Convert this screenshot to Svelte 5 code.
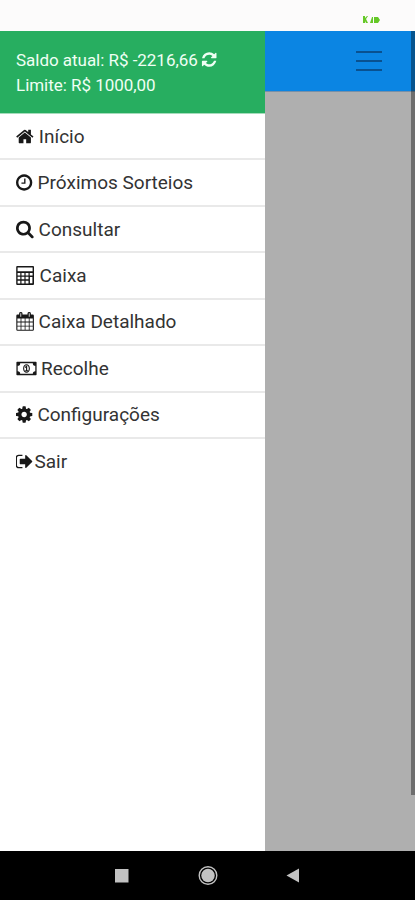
<script>
  const items = [
    { icon: 'home', label: 'Início', offset: 22.8 },
    { icon: 'clock', label: 'Próximos Sorteios', offset: 21.6 },
    { icon: 'search', label: 'Consultar', offset: 22.6 },
    { icon: 'calculator', label: 'Caixa', offset: 23.6 },
    { icon: 'calendar', label: 'Caixa Detalhado', offset: 22.6 },
    { icon: 'money', label: 'Recolhe', offset: 25 },
    { icon: 'cog', label: 'Configurações', offset: 21.4 },
    { icon: 'exit', label: 'Sair', offset: 18.4 }
  ];
</script>

{#snippet glyph(name)}
  {#if name === 'home'}
    <svg width="19" height="19" viewBox="64 0 1792 1792"><path d="M1472 992v480q0 26-19 45t-45 19h-384v-384h-256v384h-384q-26 0-45-19t-19-45v-480q0-1 .5-3t.5-3l575-474 575 474q1 2 1 6zm223-69l-62 74q-8 9-21 11h-3q-13 0-21-7l-692-577-692 577q-12 8-24 7-13-2-21-11l-62-74q-8-10-7-23.5t11-21.5l719-599q32-26 76-26t76 26l244 204v-195q0-14 9-23t23-9h192q14 0 23 9t9 23v408l219 182q10 8 11 21.5t-7 23.5z" /></svg>
  {:else if name === 'clock'}
    <svg width="19" height="19" viewBox="128 0 1792 1792"><path d="M1024 544v448q0 14-9 23t-23 9h-320q-14 0-23-9t-9-23v-64q0-14 9-23t23-9h224v-352q0-14 9-23t23-9h64q14 0 23 9t9 23zm416 352q0-148-73-273t-198-198-273-73-273 73-198 198-73 273 73 273 198 198 273 73 273-73 198-198 73-273zm224 0q0 209-103 385.5t-279.5 279.5-385.5 103-385.5-103-279.5-279.5-103-385.5 103-385.5 279.5-279.5 385.5-103 385.5 103 279.5 279.5 103 385.5z" /></svg>
  {:else if name === 'search'}
    <svg width="19" height="19" viewBox="64 64 1792 1792"><path d="M1216 832q0-185-131.5-316.5t-316.5-131.5-316.5 131.5-131.5 316.5 131.5 316.5 316.5 131.5 316.5-131.5 131.5-316.5zm512 832q0 52-38 90t-90 38q-54 0-90-38l-343-342q-179 124-399 124-143 0-273.5-55.5t-225-150-150-225-55.5-273.5 55.5-273.5 150-225 225-150 273.5-55.5 273.5 55.5 225 150 150 225 55.5 273.5q0 220-124 399l343 343q37 37 37 90z" /></svg>
  {:else if name === 'calculator'}
    <svg width="19" height="19" viewBox="0 0 19 19"><path fill-rule="evenodd" d="M1.2 0H17Q18 0 18 1V18Q18 19 17 19H1.2Q.2 19 .2 18V1Q.2 0 1.2 0ZM1.6 1.4V5.3H16.6V1.4ZM1.6 7V9.4H4.3V7ZM5.5 7V9.4H8.4V7ZM9.6 7V9.4H12.5V7ZM13.7 7V9.4H16.6V7ZM1.6 10.8V13.3H4.3V10.8ZM5.5 10.8V13.3H8.4V10.8ZM9.6 10.8V13.3H12.5V10.8ZM1.6 14.8V17.5H4.3V14.8ZM5.5 14.8V17.5H8.4V14.8ZM9.6 14.8V17.5H12.5V14.8ZM13.9 11V17.3H16.4V11Z" /></svg>
  {:else if name === 'calendar'}
    <svg width="19" height="19" viewBox="0 0 19 19"><path fill-rule="evenodd" d="M1.5 2.5H3.1V1.4Q3.1 0 4.8 0T6.5 1.4V2.5H11.5V1.4Q11.5 0 13.2 0T14.9 1.4V2.5H16.7Q17.9 2.5 17.9 3.7V17.6Q17.9 18.8 16.7 18.8H1.5Q.3 18.8 .3 17.6V3.7Q.3 2.5 1.5 2.5ZM4.4 1.2V4.8H5.2V1.2ZM12.8 1.2V4.8H13.6V1.2ZM1.4 6.5V9.6H4.6V6.5ZM5.4 6.5V9.6H8.7V6.5ZM9.5 6.5V9.6H12.8V6.5ZM13.6 6.5V9.6H16.8V6.5ZM1.4 10.4V13.7H4.6V10.4ZM5.4 10.4V13.7H8.7V10.4ZM9.5 10.4V13.7H12.8V10.4ZM13.6 10.4V13.7H16.8V10.4ZM1.4 14.5V17.7H4.6V14.5ZM5.4 14.5V17.7H8.7V14.5ZM9.5 14.5V17.7H12.8V14.5ZM13.6 14.5V17.7H16.8V14.5Z" /></svg>
  {:else if name === 'money'}
    <svg width="21" height="19" viewBox="0 0 21 19"><path fill-rule="evenodd" d="M1.2 2.8H19.8Q20.6 2.8 20.6 3.6V15.4Q20.6 16.2 19.8 16.2H1.2Q.4 16.2 .4 15.4V3.6Q.4 2.8 1.2 2.8ZM4.2 4.2Q4.2 6.8 1.7 6.8V12.2Q4.2 12.2 4.2 14.8H16.8Q16.8 12.2 19.3 12.2V6.8Q16.8 6.8 16.8 4.2ZM10.5 5.2C12.6 5.2 13.9 7.1 13.9 9.5S12.6 13.8 10.5 13.8 7.1 11.9 7.1 9.5 8.4 5.2 10.5 5.2ZM10.5 6.2C9 6.2 8.2 7.6 8.2 9.5S9 12.8 10.5 12.8 12.8 11.4 12.8 9.5 12 6.2 10.5 6.2ZM10.1 6.8H11.2V11.3H12V12.2H9.2V11.3H10V8.5L9.4 9 8.8 8.2Z" /></svg>
  {:else if name === 'cog'}
    <svg width="19" height="19" viewBox="128 0 1792 1792"><path d="M1152 896q0-106-75-181t-181-75-181 75-75 181 75 181 181 75 181-75 75-181zm512-109v222q0 12-8 23t-20 13l-185 28q-19 54-39 91 35 50 107 138 10 12 10 25t-9 23q-27 37-99 108t-94 71q-12 0-26-9l-138-108q-44 23-91 38-16 136-29 186-7 28-36 28h-222q-14 0-24.5-8.5t-11.5-21.5l-28-184q-49-16-90-37l-141 107q-10 9-25 9-14 0-25-11-126-114-165-168-7-10-7-23 0-12 8-23 15-21 51-66.5t54-70.5q-27-50-41-99l-183-27q-13-2-21-12.5t-8-23.5v-222q0-12 8-23t19-13l186-28q14-46 39-92-40-57-107-138-10-12-10-24 0-10 9-23 26-36 98.5-107.5t94.5-71.5q13 0 26 10l138 107q44-23 91-38 16-136 29-186 7-28 36-28h222q14 0 24.5 8.5t11.5 21.5l28 184q49 16 90 37l142-107q9-9 24-9 13 0 25 10 129 119 165 170 7 8 7 22 0 12-8 23-15 21-51 66.5t-54 70.5q26 50 41 98l183 28q13 2 21 12.5t8 23.5z" /></svg>
  {:else}
    <svg width="19" height="19" viewBox="96 0 1792 1792"><path d="M704 1440q0 4 1 20t.5 26.5-3 23.5-10 19.5-20.5 6.5h-320q-119 0-203.5-84.5t-84.5-203.5v-704q0-119 84.5-203.5t203.5-84.5h320q13 0 22.5 9.5t9.5 22.5q0 4 1 20t.5 26.5-3 23.5-10 19.5-20.5 6.5h-320q-66 0-113 47t-47 113v704q0 66 47 113t113 47h312l11.5 1 11.5 3 8 5.5 7 9 2 13.5zm928-544q0 26-19 45l-544 544q-19 19-45 19t-45-19-19-45v-288h-448q-26 0-45-19t-19-45v-384q0-26 19-45t45-19h448v-288q0-26 19-45t45-19 45 19l544 544q19 19 19 45z" /></svg>
  {/if}
{/snippet}

<div class="screen">
  <div class="status">
    <svg width="18" height="8" viewBox="0 0 18 8"><path d="M1 0h2v2l2-2h1l-2 3 2 4H4L3 5v2H1zM8 7l2-6h1v6zM12 1h4l2 3-2 3h-4z" /></svg>
  </div>
  <div class="body">
    <nav>
      <header>
        <div class="line">
          <span>Saldo atual: R$ -2216,66</span>
          <svg width="17" height="17" viewBox="128 0 1600 1792"><path d="M1639 1056q0 5-1 7-64 268-268 434.5t-478 166.5q-146 0-282.5-55t-243.5-157l-129 129q-19 19-45 19t-45-19-19-45v-448q0-26 19-45t45-19h448q26 0 45 19t19 45-19 45l-137 137q71 66 161 102t187 36q134 0 250-65t186-179q11-17 53-117 8-23 30-23h192q13 0 22.5 9.5t9.5 22.5zm25-800v448q0 26-19 45t-45 19h-448q-26 0-45-19t-19-45 19-45l138-138q-148-137-349-137-134 0-250 65t-186 179q-11 17-53 117-8 23-30 23h-199q-13 0-22.5-9.5t-9.5-22.5v-7q65-268 270-434.5t480-166.5q146 0 284 55.5t245 156.5l130-129q19-19 45-19t45 19 19 45z" /></svg>
        </div>
        <div class="line">Limite: R$ 1000,00</div>
      </header>
      <ul>
        {#each items as item}
          <li>
            <span class="icon" style:width="{item.offset}px">{@render glyph(item.icon)}</span>
            <span>{item.label}</span>
          </li>
        {/each}
      </ul>
    </nav>
    <main>
      <div class="topbar">
        <div class="burger"><i></i><i></i><i></i></div>
      </div>
      <div class="scrollbar"></div>
    </main>
  </div>
  <footer>
    <svg width="415" height="49" viewBox="0 0 415 49">
      <rect x="115" y="18" width="13.5" height="13.5" />
      <circle cx="208" cy="24.5" r="6.7" />
      <circle class="ring" cx="208" cy="24.5" r="8.8" />
      <path d="M286.5 24.5L299 17.5V31.5Z" />
    </svg>
  </footer>
</div>

<style>
  .screen {
    width: 415px;
    height: 900px;
    display: flex;
    flex-direction: column;
    overflow: hidden;
    background: #fff;
    font-family: Roboto, "Liberation Sans", sans-serif;
  }
  svg { display: block; flex: none; }
  .status {
    height: 31px;
    flex: none;
    box-sizing: border-box;
    padding: 16px 0 0 362px;
    background: #fcfbfb;
  }
  .status path { fill: #65c827; }
  .body { flex: 1; display: flex; min-height: 0; }
  nav { width: 265px; flex: none; background: #fff; }
  header {
    height: 83px;
    box-sizing: border-box;
    padding: 16px 0 0 16px;
    border-bottom: 1px solid #a5dcbb;
    background: #27ae60;
    color: #effff4;
  }
  .line {
    display: flex;
    align-items: center;
    height: 25px;
    font-size: 17px;
    letter-spacing: -0.03px;
    white-space: nowrap;
  }
  .line svg { fill: #effff4; margin-left: 3px; }
  ul { list-style: none; margin: 0; padding: 0; }
  li {
    display: flex;
    align-items: center;
    height: 46.45px;
    box-sizing: border-box;
    padding-left: 16px;
    border-bottom: 2px solid #e9e9e9;
    font-size: 19px;
    color: #333;
    white-space: nowrap;
  }
  li:last-child { border-color: transparent; }
  .icon { flex: none; fill: #181818; }
  main {
    flex: 1;
    display: flex;
    flex-direction: column;
    background: #afafaf;
    position: relative;
  }
  .topbar {
    height: 61px;
    flex: none;
    display: flex;
    justify-content: flex-end;
    box-sizing: border-box;
    padding: 20px 33px 0 0;
    background: #0b85e3;
    border-bottom: 1px solid #7790a8;
  }
  .burger {
    width: 26px;
    height: 20px;
    display: flex;
    flex-direction: column;
    justify-content: space-between;
  }
  .burger i { height: 2px; background: #095190; }
  .scrollbar {
    position: absolute;
    right: 0;
    top: 0;
    width: 4px;
    height: 764px;
    background: rgba(0, 0, 0, 0.37);
  }
  footer { height: 49px; flex: none; background: #000; }
  footer svg { fill: #c2c2c2; }
  footer .ring { fill: none; stroke: #c2c2c2; stroke-width: 1.4; }
</style>
